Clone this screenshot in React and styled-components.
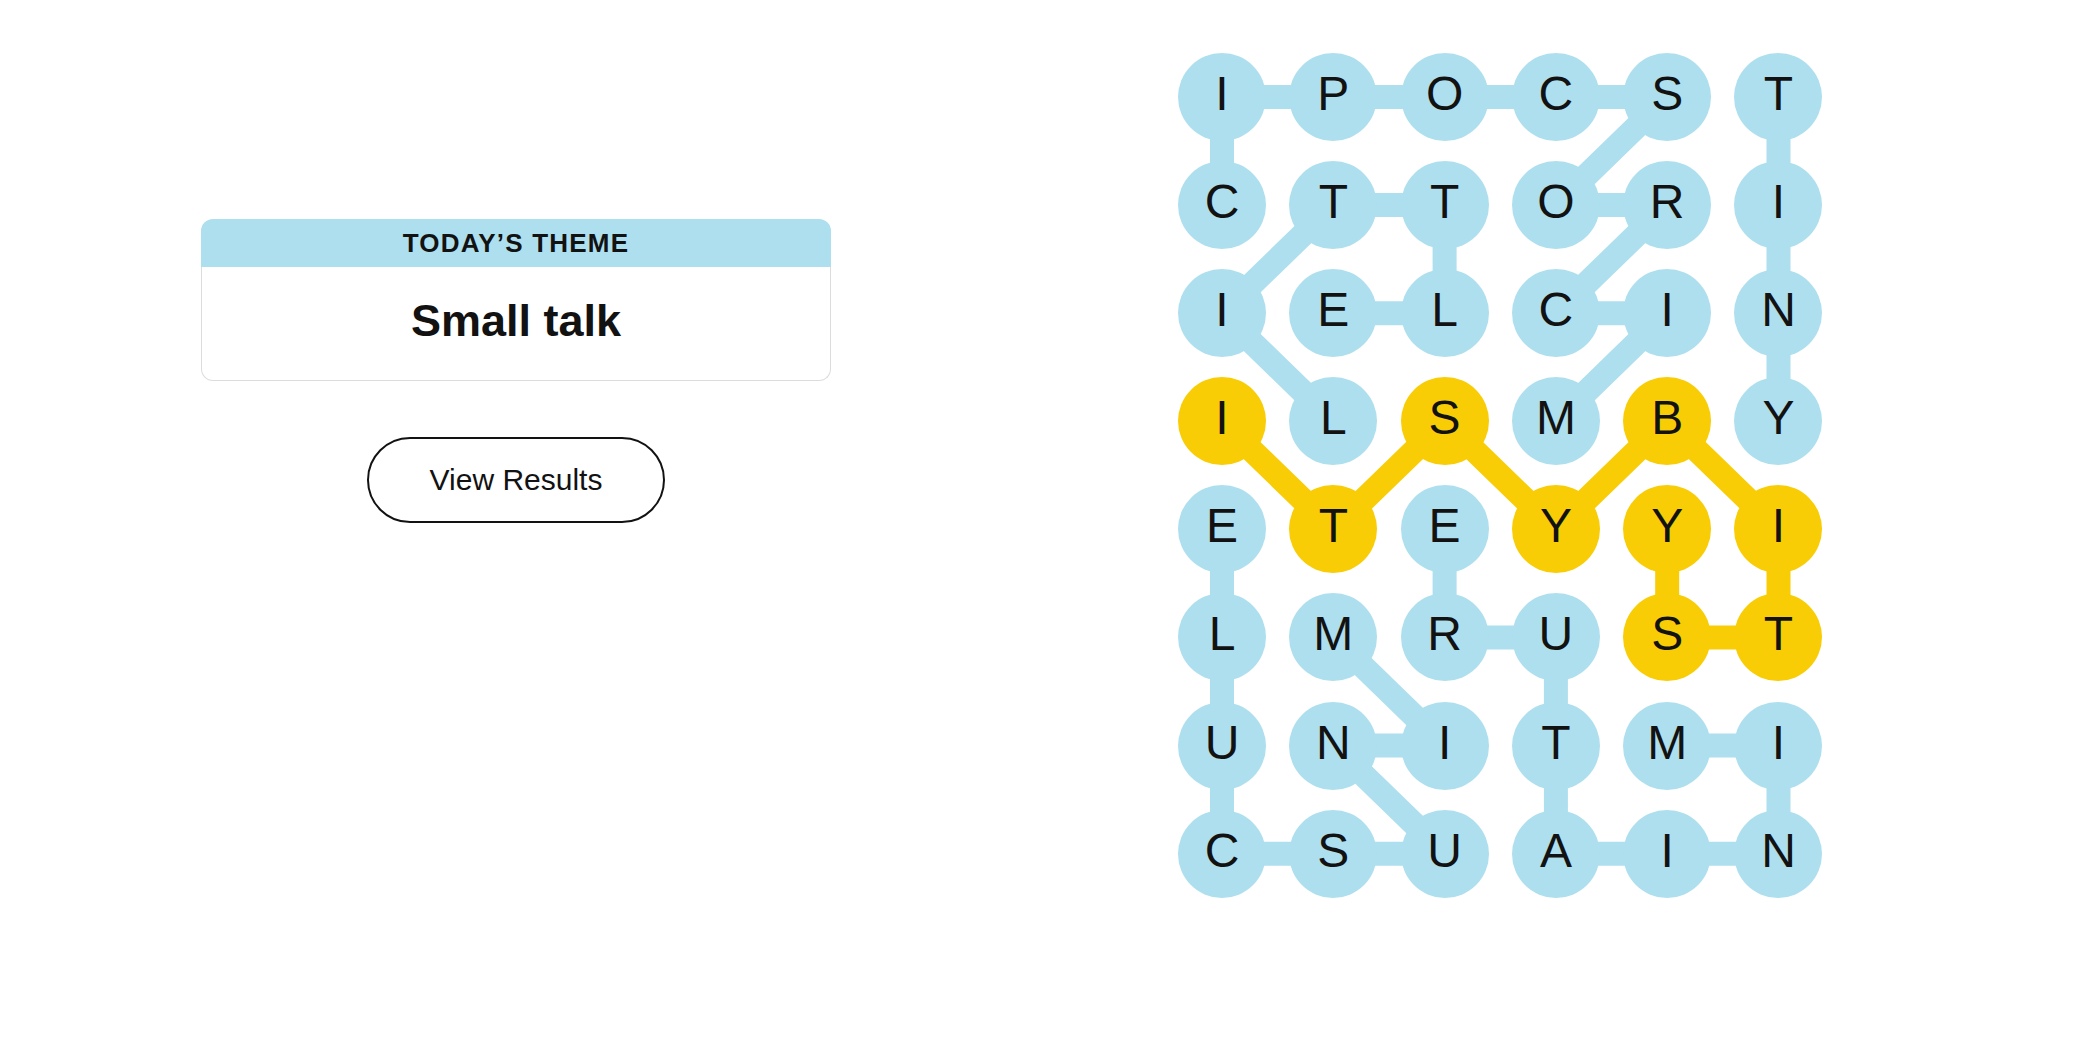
import React from 'react';
import styled, { createGlobalStyle } from 'styled-components';

const GlobalStyle = createGlobalStyle`
  html, body {
    margin: 0;
    padding: 0;
    background: #ffffff;
  }
  body {
    font-family: "Liberation Sans", Arial, sans-serif;
    color: #121212;
  }
`;

const BLUE = '#aedfee';
const YELLOW = '#f8cd05';

const CELL = 88;
const COL_GAP = 23.3;
const ROW_GAP = 20.1;

const LETTERS = [
  'IPOCST',
  'CTTORI',
  'IELCIN',
  'ILSMBY',
  'ETEYYI',
  'LMRUST',
  'UNITMI',
  'CSUAIN',
];

// each found word as the cells it runs through, in order
const WORDS = [
  { kind: 'theme', path: [[3, 3], [2, 4], [2, 3], [1, 4], [1, 3], [0, 4], [0, 3], [0, 2], [0, 1], [0, 0], [1, 0]] },
  { kind: 'theme', path: [[3, 1], [2, 0], [1, 1], [1, 2], [2, 2], [2, 1]] },
  { kind: 'theme', path: [[0, 5], [1, 5], [2, 5], [3, 5]] },
  { kind: 'theme', path: [[6, 4], [6, 5], [7, 5], [7, 4], [7, 3], [6, 3], [5, 3], [5, 2], [4, 2]] },
  { kind: 'theme', path: [[5, 1], [6, 2], [6, 1], [7, 2], [7, 1], [7, 0], [6, 0], [5, 0], [4, 0]] },
  { kind: 'spangram', path: [[3, 0], [4, 1], [3, 2], [4, 3], [3, 4], [4, 5], [5, 5], [5, 4], [4, 4]] },
];

const colorFor = (kind) => (kind === 'spangram' ? YELLOW : BLUE);

const Page = styled.main`
  display: flex;
  align-items: flex-start;
  gap: 347px;
  padding: 53px 0 0 201px;
  min-height: 100vh;
  box-sizing: border-box;
`;

const Side = styled.section`
  width: 630px;
  margin-top: 166px;
  display: flex;
  flex-direction: column;
  align-items: center;
`;

const ThemeCard = styled.div`
  width: 100%;
  display: flex;
  flex-direction: column;
`;

const ThemeHeader = styled.h2`
  margin: 0;
  height: 48px;
  display: flex;
  align-items: center;
  justify-content: center;
  background: ${BLUE};
  border-radius: 12px 12px 0 0;
  font-size: 26px;
  font-weight: 700;
  letter-spacing: 1.2px;
  text-transform: uppercase;
  color: #121212;
`;

const ThemeBody = styled.div`
  height: 114px;
  display: flex;
  align-items: center;
  justify-content: center;
  border: 1px solid #dcdcdc;
  border-top: none;
  border-radius: 0 0 12px 12px;
  padding-bottom: 6px;
  box-sizing: border-box;
  font-size: 45px;
  font-weight: 700;
  color: #121212;
`;

const ResultsButton = styled.button`
  margin-top: 56px;
  width: 298px;
  height: 86px;
  border: 2px solid #121212;
  border-radius: 43px;
  background: #ffffff;
  font-family: "Liberation Sans", Arial, sans-serif;
  font-size: 30px;
  color: #121212;
  cursor: pointer;
`;

const Board = styled.div`
  position: relative;
  display: grid;
  grid-template-columns: repeat(6, ${CELL}px);
  grid-auto-rows: ${CELL}px;
  column-gap: ${COL_GAP}px;
  row-gap: ${ROW_GAP}px;
`;

const Links = styled.svg`
  position: absolute;
  inset: 0;
  width: 100%;
  height: 100%;
  overflow: visible;
  z-index: 0;
`;

const Cell = styled.div`
  position: relative;
  z-index: 1;
  width: ${CELL}px;
  height: ${CELL}px;
  border-radius: 50%;
  background: ${(p) => p.$color};
  display: flex;
  align-items: center;
  justify-content: center;
  padding-bottom: 7px;
  box-sizing: border-box;
  font-size: 48px;
  color: #121212;
  user-select: none;
`;

const centerOf = ([r, c]) => [
  c * (CELL + COL_GAP) + CELL / 2,
  r * (CELL + ROW_GAP) + CELL / 2,
];

function App() {
  const cellColor = {};
  WORDS.forEach((w) => {
    w.path.forEach(([r, c]) => {
      cellColor[`${r}-${c}`] = colorFor(w.kind);
    });
  });

  return (
    <>
      <GlobalStyle />
      <Page>
        <Side>
          <ThemeCard>
            <ThemeHeader>Today’s Theme</ThemeHeader>
            <ThemeBody>Small talk</ThemeBody>
          </ThemeCard>
          <ResultsButton type="button">View Results</ResultsButton>
        </Side>

        <Board>
          <Links>
            {WORDS.map((w, i) => (
              <polyline
                key={i}
                points={w.path.map((p) => centerOf(p).join(',')).join(' ')}
                fill="none"
                stroke={colorFor(w.kind)}
                strokeWidth={24}
                strokeLinejoin="round"
              />
            ))}
          </Links>
          {LETTERS.map((row, r) =>
            row.split('').map((ch, c) => (
              <Cell key={`${r}-${c}`} $color={cellColor[`${r}-${c}`] || BLUE}>
                {ch}
              </Cell>
            ))
          )}
        </Board>
      </Page>
    </>
  );
}

export default App;
